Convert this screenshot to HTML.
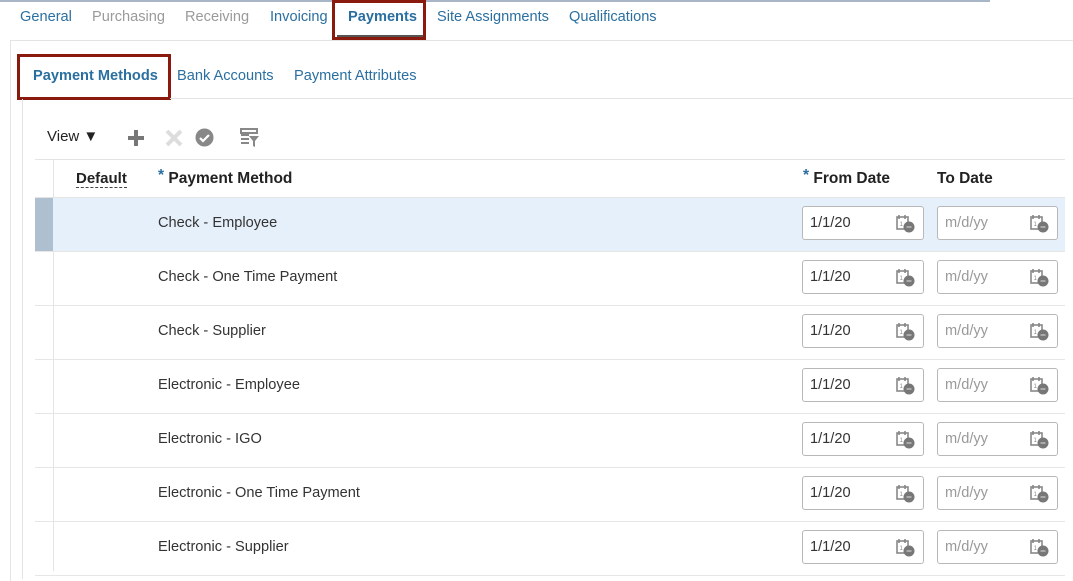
<!DOCTYPE html><html><head><style>
body{margin:0;width:1073px;height:571px;overflow:hidden;background:#fff;font-family:"Liberation Sans",sans-serif;position:relative}
.a{position:absolute}
.tab{position:absolute;top:9px;font-size:14.6px;color:#2a6fa0}
.g{color:#9a9a9a}
.row{position:absolute;left:35px;width:1030px;height:53px;border-bottom:1px solid #e6e6e6}
.cell{position:absolute;left:123px;top:17px;font-size:14.6px;color:#333}
.in{position:absolute;top:8px;height:34px;border:1px solid #b8b8b8;border-radius:3px;background:#fff;font-size:14.6px;box-sizing:border-box;padding:8px 7px;color:#333}
.cal{position:absolute;right:8px;top:7px;width:19px;height:19px}
</style></head><body>
<div class="a" style="left:0;top:0;width:990px;height:2px;background:#a9b6c8"></div>
<span class="tab" style="left:20px">General</span>
<span class="tab g" style="left:92px">Purchasing</span>
<span class="tab g" style="left:185px">Receiving</span>
<span class="tab" style="left:270px">Invoicing</span>
<span class="tab" style="left:348px;font-weight:bold">Payments</span>
<span class="tab" style="left:437px">Site Assignments</span>
<span class="tab" style="left:569px">Qualifications</span>
<div class="a" style="left:337px;top:35px;width:88px;height:4px;background:#555"></div>
<div class="a" style="left:332px;top:0;width:88px;height:34px;border:3px solid #8b1a0e"></div>
<div class="a" style="left:10px;top:40px;width:1063px;height:540px;border-left:1px solid #e4e4e4;border-top:1px solid #e4e4e4"></div>
<span class="a" style="left:33px;top:68px;font-size:14.6px;color:#2a6fa0;font-weight:bold">Payment Methods</span>
<span class="a" style="left:177px;top:68px;font-size:14.6px;color:#2a6fa0">Bank Accounts</span>
<span class="a" style="left:294px;top:68px;font-size:14.6px;color:#2a6fa0">Payment Attributes</span>
<div class="a" style="left:17px;top:54px;width:148px;height:40px;border:3px solid #8b1a0e"></div>
<div class="a" style="left:170px;top:98px;width:903px;height:1px;background:#e4e4e4"></div>
<div class="a" style="left:22px;top:99px;width:1px;height:480px;background:#e4e4e4"></div>
<span class="a" style="left:47px;top:128px;font-size:15px;color:#222">View &#9660;</span>
<svg class="a" style="left:127px;top:129px" width="18" height="18"><path d="M9 1v16M1 9h16" stroke="#777" stroke-width="4"/></svg>
<svg class="a" style="left:165px;top:129px" width="18" height="18"><path d="M2 2l14 14M16 2L2 16" stroke="#ddd" stroke-width="4"/></svg>
<svg class="a" style="left:195px;top:128px" width="19" height="19"><circle cx="9.5" cy="9.5" r="9" fill="#888"/><path d="M5 10l3 3 6-6" stroke="#fff" stroke-width="2.2" fill="none"/></svg>
<svg class="a" style="left:240px;top:128px" width="20" height="20"><path d="M1 1h16v4H1zM1 7h8M1 11h8M1 15h8" stroke="#888" stroke-width="2" fill="none"/><path d="M9 8h10l-4 5v6l-2-1v-5z" fill="#888"/></svg>
<div class="a" style="left:35px;top:159px;width:1030px;height:1px;background:#e4e4e4"></div>
<div class="a" style="left:35px;top:160px;width:18px;height:411px;border-right:1px solid #e4e4e4"></div>
<span class="a" style="left:76px;top:170px;font-size:15px;font-weight:bold;color:#222;border-bottom:1px dashed #444">Default</span>
<span class="a" style="left:158px;top:167px;font-size:15.5px;font-weight:bold;color:#222"><span style="color:#2a6fa0">*</span> <span style="position:relative;top:3px">Payment Method</span></span>
<span class="a" style="left:803px;top:167px;font-size:15.5px;font-weight:bold;color:#222"><span style="color:#2a6fa0">*</span> <span style="position:relative;top:3px">From Date</span></span>
<span class="a" style="left:937px;top:170px;font-size:15.5px;font-weight:bold;color:#222">To Date</span>
<div class="a" style="left:35px;top:197px;width:1030px;height:1px;background:#e4e4e4"></div>
<div id="rows"></div>
<script>
var n=["Check - Employee","Check - One Time Payment","Check - Supplier","Electronic - Employee","Electronic - IGO","Electronic - One Time Payment","Electronic - Supplier"];
var cal='<svg class="cal" viewBox="0 0 19 19"><rect x="1" y="3" width="11" height="12" fill="none" stroke="#888" stroke-width="1.6"/><path d="M3 1v4M9 1v4" stroke="#888" stroke-width="1.6"/><text x="3.5" y="12" font-size="6" fill="#888">1</text><circle cx="13" cy="13" r="5.5" fill="#777"/><path d="M10.5 13h5" stroke="#ddd" stroke-width="1"/></svg>';
var h="";n.forEach(function(t,i){h+='<div class="row" style="top:'+(198+i*54)+'px;'+(i==0?'background:#e6f0fb':'')+'">'+(i==0?'<div style="position:absolute;left:0;top:0;width:18px;height:53px;background:#aebfcf"></div>':'')+'<span class="cell">'+t+'</span><div class="in" style="left:767px;width:122px">1/1/20'+cal+'</div><div class="in" style="left:902px;width:121px;color:#999">m/d/yy'+cal+'</div></div>';});
document.getElementById("rows").innerHTML=h;
</script>
</body></html>
